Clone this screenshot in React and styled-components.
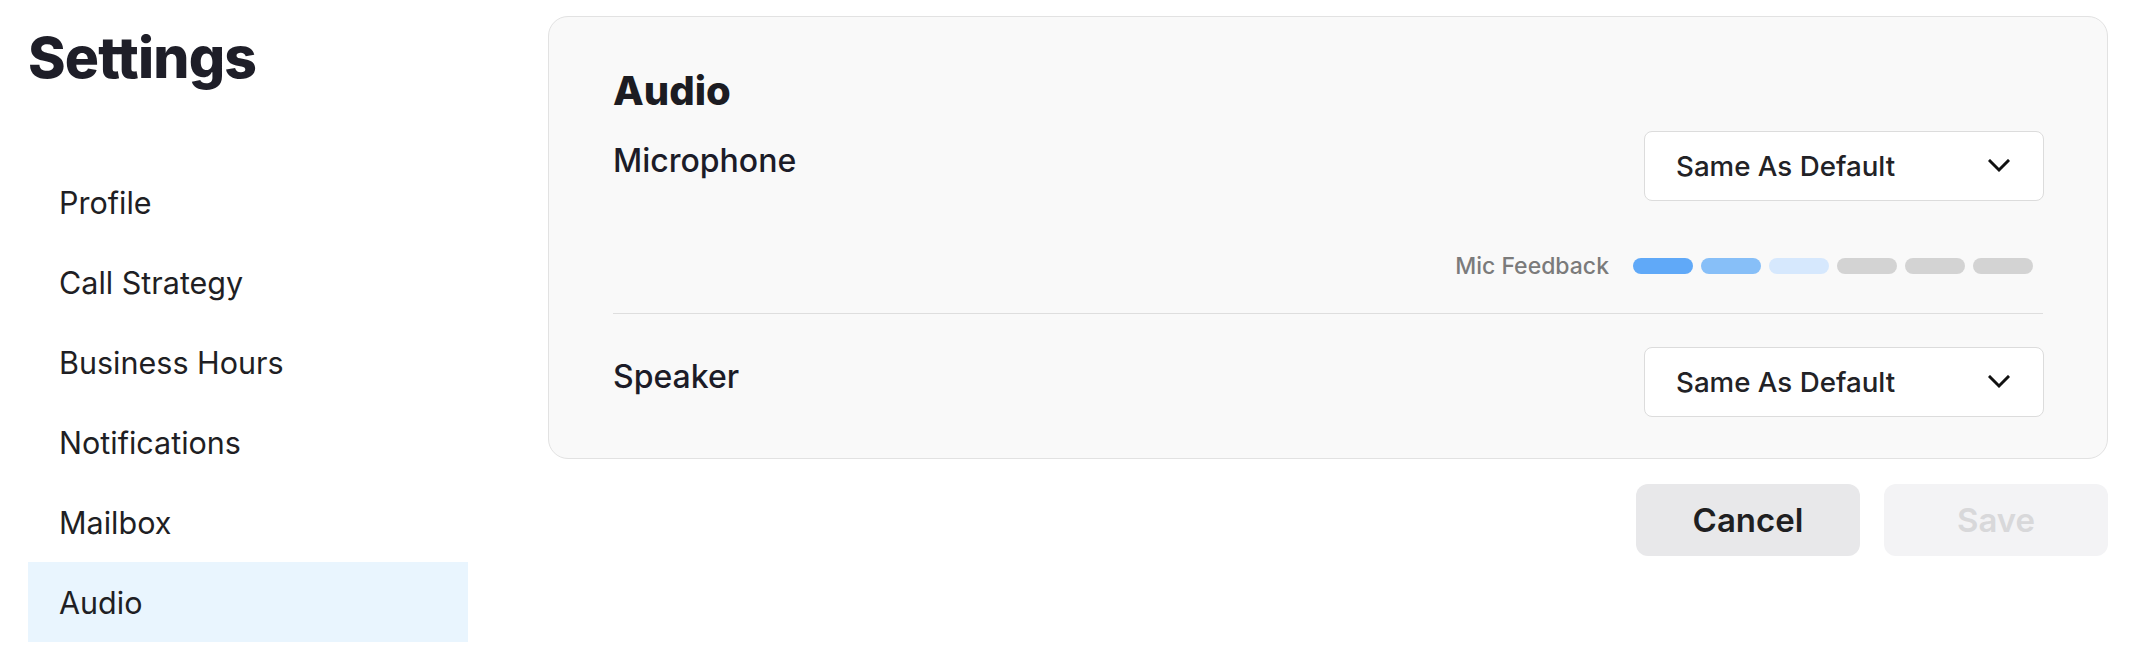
import React from "react";
import styled, { createGlobalStyle } from "styled-components";

const Global = createGlobalStyle`
  html, body { margin: 0; padding: 0; background: #ffffff; }
  body { font-family: Inter, "Noto Sans", "Liberation Sans", sans-serif; color: #1d1d26; }
  * { box-sizing: border-box; }
`;

const Page = styled.div`
  display: flex;
  align-items: flex-start;
  gap: 80px;
  padding: 16px 46px 0 28px;
  width: 2154px;
`;

const Sidebar = styled.aside`
  width: 440px;
  flex: none;
  display: flex;
  flex-direction: column;
`;

const Title = styled.h1`
  margin: 7px 0 0;
  font-size: 57px;
  line-height: 70px;
  font-weight: 800;
  letter-spacing: -0.8px;
  color: #1e1e28;
`;

const NavList = styled.nav`
  margin-top: 69px;
  display: flex;
  flex-direction: column;
`;

const NavItem = styled.div`
  height: 80px;
  display: flex;
  align-items: center;
  padding-left: 31px;
  font-size: 30.5px;
  font-weight: 400;
  color: #1f1f24;
  background: ${(p) => (p.$active ? "#e9f5fe" : "transparent")};
`;

const Main = styled.main`
  flex: 1;
  display: flex;
  flex-direction: column;
`;

const Card = styled.section`
  background: #f9f9f9;
  border: 1.5px solid #e2e2e2;
  border-radius: 20px;
  padding: 50px 64px 41px 64px;
  display: flex;
  flex-direction: column;
`;

const Heading = styled.h2`
  margin: 0 0 15.5px;
  font-size: 40px;
  line-height: 48px;
  font-weight: 800;
  color: #1c1c22;
`;

const Row = styled.div`
  display: flex;
  justify-content: space-between;
  align-items: flex-start;
  height: 70px;
`;

const Label = styled.div`
  padding-top: 11px;
  font-size: 32px;
  line-height: 38px;
  font-weight: 500;
  color: #1c1c28;
`;

const Select = styled.button`
  width: 400px;
  height: 70px;
  margin-right: -1px;
  background: #ffffff;
  border: 1.5px solid #dcdcdc;
  border-radius: 8px;
  display: flex;
  align-items: center;
  justify-content: space-between;
  padding: 0 33px 0 31px;
  font-family: inherit;
  font-size: 27.7px;
  font-weight: 500;
  color: #222226;
  cursor: pointer;
`;

const Feedback = styled.div`
  margin-top: 51px;
  display: flex;
  align-items: center;
  justify-content: flex-end;
  gap: 24px;
  padding-right: 10px;
  height: 28px;
`;

const FeedbackText = styled.span`
  font-size: 23px;
  font-weight: 500;
  color: #7b7b7b;
`;

const Bars = styled.div`
  display: flex;
  gap: 8px;
`;

const Bar = styled.span`
  width: 60px;
  height: 16px;
  border-radius: 8px;
  background: ${(p) => p.$color};
`;

const Divider = styled.hr`
  margin: 33px 0 32.5px;
  border: none;
  height: 1.5px;
  background: #dedede;
`;

const Actions = styled.div`
  margin-top: 25px;
  display: flex;
  justify-content: flex-end;
  gap: 24px;
`;

const Button = styled.button`
  width: 224px;
  height: 72px;
  border: none;
  border-radius: 12px;
  font-family: inherit;
  font-size: 33px;
  font-weight: 600;
  background: ${(p) => (p.$disabled ? "#f3f3f5" : "#e8e8ea")};
  color: ${(p) => (p.$disabled ? "#d8d8da" : "#1f1f22")};
  cursor: ${(p) => (p.$disabled ? "default" : "pointer")};
`;

const Chevron = () => (
  <svg width="22" height="14" viewBox="0 0 22 14" fill="none">
    <polyline
      points="2,2 11,11 20,2"
      stroke="#111"
      strokeWidth="3"
      strokeLinecap="square"
      fill="none"
    />
  </svg>
);

const navItems = ["Profile", "Call Strategy", "Business Hours", "Notifications", "Mailbox", "Audio"];
const barColors = ["#60a9f8", "#87bff8", "#d6e8fd", "#d3d3d3", "#d3d3d3", "#d3d3d3"];

export default function App() {
  return (
    <>
      <Global />
      <Page>
        <Sidebar>
          <Title>Settings</Title>
          <NavList>
            {navItems.map((n) => (
              <NavItem key={n} $active={n === "Audio"}>
                {n}
              </NavItem>
            ))}
          </NavList>
        </Sidebar>
        <Main>
          <Card>
            <Heading>Audio</Heading>
            <Row>
              <Label>Microphone</Label>
              <Select>
                <span>Same As Default</span>
                <Chevron />
              </Select>
            </Row>
            <Feedback>
              <FeedbackText>Mic Feedback</FeedbackText>
              <Bars>
                {barColors.map((c, i) => (
                  <Bar key={i} $color={c} />
                ))}
              </Bars>
            </Feedback>
            <Divider />
            <Row>
              <Label>Speaker</Label>
              <Select>
                <span>Same As Default</span>
                <Chevron />
              </Select>
            </Row>
          </Card>
          <Actions>
            <Button>Cancel</Button>
            <Button $disabled>Save</Button>
          </Actions>
        </Main>
      </Page>
    </>
  );
}
